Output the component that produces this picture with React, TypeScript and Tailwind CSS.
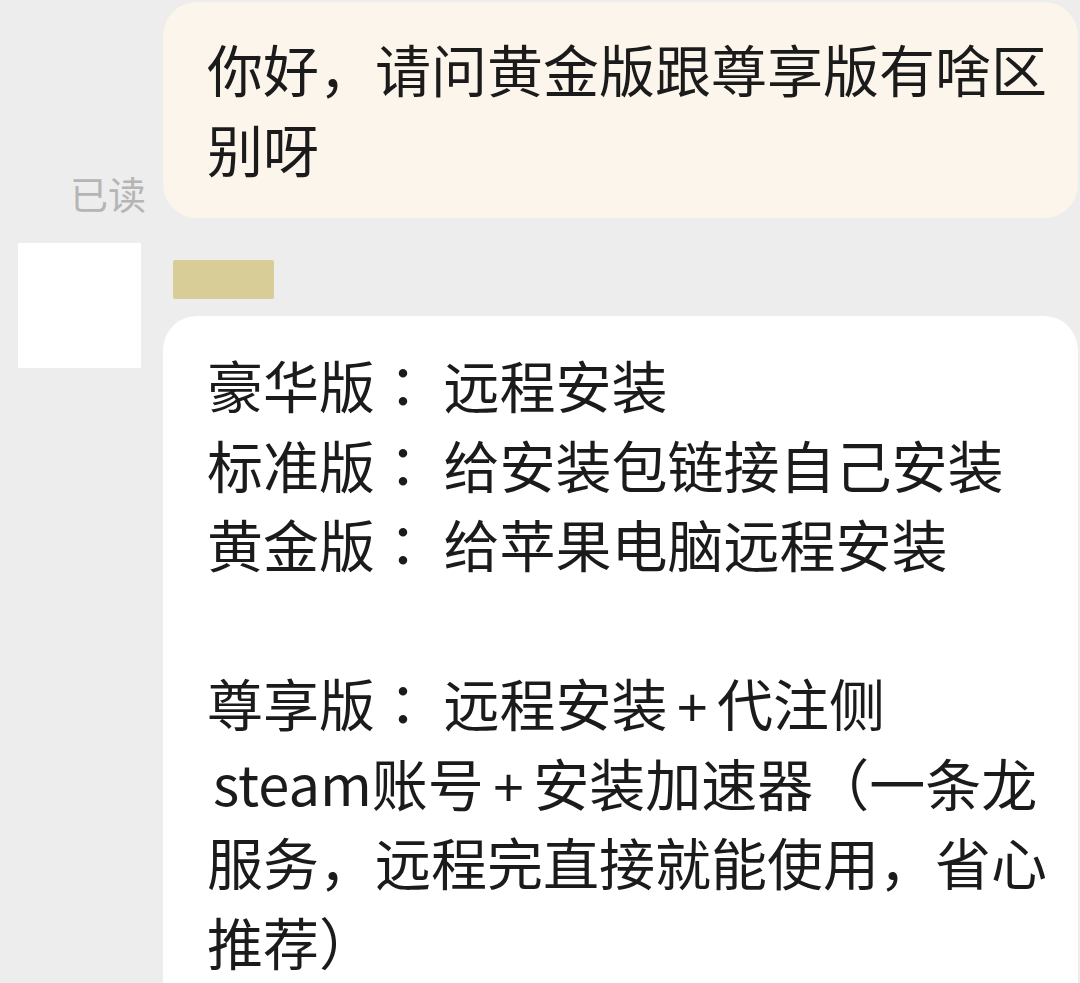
const jp = "font-['Noto_Sans_CJK_JP',sans-serif]";

type Part = string | { plus: true } | { colon: true };

const replyLines: Part[][] = [
  ["豪华版", { colon: true }, " 远程安装"],
  ["标准版", { colon: true }, " 给安装包链接自己安装"],
  ["黄金版", { colon: true }, " 给苹果电脑远程安装"],
  [],
  ["尊享版", { colon: true }, " 远程安装", { plus: true }, "代注侧"],
  ["steam账号", { plus: true }, "安装加速器（一条龙"],
  ["服务，远程完直接就能使用，省心"],
  ["推荐）"],
];

function renderPart(p: Part, i: number) {
  if (typeof p === "string") return <span key={i}>{p}</span>;
  if ("plus" in p)
    return (
      <span key={i} className="px-[9px] font-['Liberation_Sans',sans-serif] text-[54px] leading-none">
        +
      </span>
    );
  return (
    <span key={i} className={jp}>
      ：
    </span>
  );
}

export default function App() {
  return (
    <div className="h-[983px] w-[1080px] overflow-hidden bg-[#ededed] font-['Noto_Sans_CJK_SC',sans-serif] text-[#1b1b1b]">
      {/* my message */}
      <div className="flex items-stretch pt-[2px]">
        <div className="flex w-[163px] shrink-0 items-end justify-end pr-[17px] pb-[6px]">
          <span className="text-[38px] leading-[38px] text-[#b5b5b5]">已读</span>
        </div>
        <div className="mr-[2px] flex-1 rounded-[34px] bg-[#fcf5eb] pt-[26px] pb-[30px] pl-[44px] pr-[20px] text-[56px] leading-[80px]">
          你好，请问黄金版跟尊享版有啥区
          <br />
          别呀
        </div>
      </div>

      {/* their reply */}
      <div className="flex items-start pt-[25px]">
        <div className="ml-[18px] h-[125px] w-[123px] shrink-0 bg-white" />
        <div className="ml-[22px] flex-1">
          <div className="mt-[17px] ml-[10px] h-[39px] w-[101px] rounded-[2px] bg-[#d8cd96]" />
          <div className="mt-[17px] mr-[2px] h-[800px] rounded-[34px] bg-white pt-[28px] pl-[44px] text-[56px] leading-[79.5px]">
            {replyLines.map((line, i) =>
              line.length ? (
                <div key={i} className={`h-[79.5px] ${i === 5 ? "pl-[6px]" : ""}`}>
                  {line.map(renderPart)}
                </div>
              ) : (
                <div key={i} className="h-[79.5px]" />
              )
            )}
          </div>
        </div>
      </div>
    </div>
  );
}
